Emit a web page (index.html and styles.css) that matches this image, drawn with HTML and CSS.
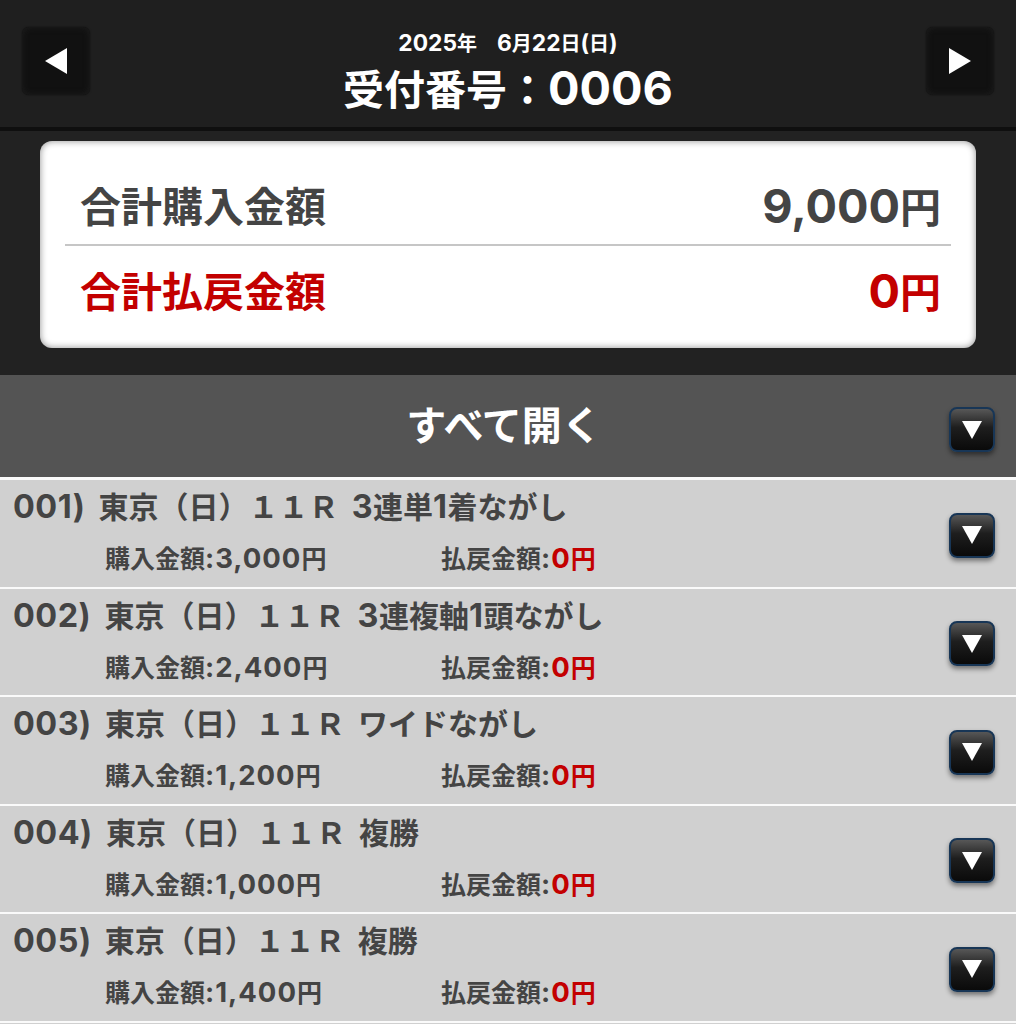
FILE: index.html
```html
<!DOCTYPE html>
<html lang="ja">
<head>
<meta charset="utf-8">
<title>受付番号</title>
<link rel="stylesheet" href="styles.css">
</head>
<body>
<header class="topbar">
  <div class="nav">
    <svg width="24" height="28" viewBox="0 0 24 28"><polygon points="23,1 23,27 1,14" fill="#fff"/></svg>
  </div>
  <div class="heading">
    <div class="date"><span class="n">2025</span>年　<span class="n">6</span>月<span class="n">22</span>日<span class="n">(</span>日<span class="n">)</span></div>
    <div class="title">受付番号：<span class="n">0006</span></div>
  </div>
  <div class="nav">
    <svg width="24" height="28" viewBox="0 0 24 28"><polygon points="1,1 1,27 23,14" fill="#fff"/></svg>
  </div>
</header>

<section class="summary">
  <div class="card">
    <div class="sum-row first">
      <span class="sum-label">合計購入金額</span>
      <span class="sum-value"><span class="n">9,000</span>円</span>
    </div>
    <div class="sum-row second red">
      <span class="sum-label">合計払戻金額</span>
      <span class="sum-value"><span class="n">0</span>円</span>
    </div>
  </div>
</section>

<div class="openall">
  <span class="openall-text">すべて開く</span>
  <div class="toggle"><svg width="20" height="18" viewBox="0 0 20 18"><polygon points="0,0 20,0 10,18" fill="#fff"/></svg></div>
</div>

<ul class="tickets">
  <li class="ticket">
    <div class="ticket-body">
      <div class="ticket-title"><span class="n">001)</span> 東京（日）１１Ｒ <span class="n">3</span>連単<span class="n">1</span>着ながし</div>
      <div class="ticket-amounts">
        <span class="amt">購入金額<span class="n">:3,000</span>円</span>
        <span class="amt">払戻金額<span class="n">:</span><span class="red"><span class="n">0</span>円</span></span>
      </div>
    </div>
    <div class="toggle"><svg width="20" height="18" viewBox="0 0 20 18"><polygon points="0,0 20,0 10,18" fill="#fff"/></svg></div>
  </li>
  <li class="ticket">
    <div class="ticket-body">
      <div class="ticket-title"><span class="n">002)</span> 東京（日）１１Ｒ <span class="n">3</span>連複軸<span class="n">1</span>頭ながし</div>
      <div class="ticket-amounts">
        <span class="amt">購入金額<span class="n">:2,400</span>円</span>
        <span class="amt">払戻金額<span class="n">:</span><span class="red"><span class="n">0</span>円</span></span>
      </div>
    </div>
    <div class="toggle"><svg width="20" height="18" viewBox="0 0 20 18"><polygon points="0,0 20,0 10,18" fill="#fff"/></svg></div>
  </li>
  <li class="ticket">
    <div class="ticket-body">
      <div class="ticket-title"><span class="n">003)</span> 東京（日）１１Ｒ ワイドながし</div>
      <div class="ticket-amounts">
        <span class="amt">購入金額<span class="n">:1,200</span>円</span>
        <span class="amt">払戻金額<span class="n">:</span><span class="red"><span class="n">0</span>円</span></span>
      </div>
    </div>
    <div class="toggle"><svg width="20" height="18" viewBox="0 0 20 18"><polygon points="0,0 20,0 10,18" fill="#fff"/></svg></div>
  </li>
  <li class="ticket">
    <div class="ticket-body">
      <div class="ticket-title"><span class="n">004)</span> 東京（日）１１Ｒ 複勝</div>
      <div class="ticket-amounts">
        <span class="amt">購入金額<span class="n">:1,000</span>円</span>
        <span class="amt">払戻金額<span class="n">:</span><span class="red"><span class="n">0</span>円</span></span>
      </div>
    </div>
    <div class="toggle"><svg width="20" height="18" viewBox="0 0 20 18"><polygon points="0,0 20,0 10,18" fill="#fff"/></svg></div>
  </li>
  <li class="ticket">
    <div class="ticket-body">
      <div class="ticket-title"><span class="n">005)</span> 東京（日）１１Ｒ 複勝</div>
      <div class="ticket-amounts">
        <span class="amt">購入金額<span class="n">:1,400</span>円</span>
        <span class="amt">払戻金額<span class="n">:</span><span class="red"><span class="n">0</span>円</span></span>
      </div>
    </div>
    <div class="toggle"><svg width="20" height="18" viewBox="0 0 20 18"><polygon points="0,0 20,0 10,18" fill="#fff"/></svg></div>
  </li>
</ul>
</body>
</html>
```

FILE: styles.css
```css
* { box-sizing: border-box; }

html, body {
  margin: 0;
  padding: 0;
  background: #d0d0d0;
}

body {
  font-family: Inter, "Noto Sans CJK JP", sans-serif;
  font-weight: 700;
  color: #444;
}

.n { font-size: 1.14em; }

/* header */
.topbar {
  height: 131px;
  background: #1f1f1f;
  border-bottom: 4px solid #0f0f0f;
  display: flex;
  align-items: flex-start;
  justify-content: space-between;
  padding: 27px 22px 0;
}

.nav {
  width: 68px;
  height: 68px;
  border-radius: 7px;
  background: #111;
  box-shadow: 0 0 2px rgba(0, 0, 0, 0.6), inset 0 0 6px rgba(40, 40, 40, 0.6);
  display: flex;
  align-items: center;
  justify-content: center;
}

.heading {
  display: flex;
  flex-direction: column;
  align-items: center;
  color: #fff;
  padding-top: 4px;
}

.date {
  font-size: 20px;
  line-height: 24px;
}

.title {
  margin-top: 7px;
  font-size: 41px;
  line-height: 50px;
}

/* summary */
.summary {
  background: #222;
  padding: 10px 40px 27px;
}

.card {
  height: 207px;
  background: #fff;
  border-radius: 12px;
  box-shadow: inset 0 0 7px rgba(0, 0, 0, 0.45);
  padding: 36px 25px 0;
}

.sum-row {
  display: flex;
  justify-content: space-between;
  align-items: center;
  padding: 0 10px 0 15px;
  line-height: 58px;
  font-size: 41px;
  color: #444;
}

.sum-row.first {
  padding-bottom: 7px;
  border-bottom: 2px solid #c6c6c6;
}

.sum-row.second {
  padding-top: 16px;
}

.red { color: #c30000; }

/* open all bar */
.openall {
  height: 105px;
  background: #545454;
  border-bottom: 3px solid #fafafa;
  display: flex;
  align-items: center;
  justify-content: center;
  position: relative;
}

.openall-text {
  color: #fff;
  font-size: 40px;
  line-height: 50px;
  margin-left: -8px;
}

.openall .toggle {
  position: absolute;
  right: 21px;
  top: 32px;
}

.toggle {
  width: 46px;
  height: 45px;
  border-radius: 8px;
  border: 2px solid #183656;
  background: linear-gradient(#575757 0%, #1e1e1e 45%, #0a0a0a 100%);
  box-shadow: 0 3px 5px rgba(0, 0, 0, 0.45);
  display: flex;
  align-items: center;
  justify-content: center;
  flex: none;
}

/* tickets */
.tickets {
  list-style: none;
  margin: 0;
  padding: 0;
}

.ticket {
  height: 108.5px;
  background: #d0d0d0;
  border-bottom: 2px solid #fafafa;
  display: flex;
  align-items: center;
  padding: 0 21px 0 13px;
}

.ticket-body {
  flex: 1;
  align-self: flex-start;
}

.ticket .toggle { margin-top: 4px; }

.ticket-title {
  margin-top: 10px;
  font-size: 30px;
  line-height: 34px;
  color: #444;
  white-space: nowrap;
  word-spacing: 6px;
}

.ticket-title .n { font-size: 1.08em; letter-spacing: 0.5px; }

.ticket-amounts {
  margin-top: 18px;
  padding-left: 92px;
  display: grid;
  grid-template-columns: 336px auto;
  font-size: 25px;
  line-height: 32px;
  color: #444;
}

.ticket-amounts .n { font-size: 1.1em; letter-spacing: 1px; }
```
